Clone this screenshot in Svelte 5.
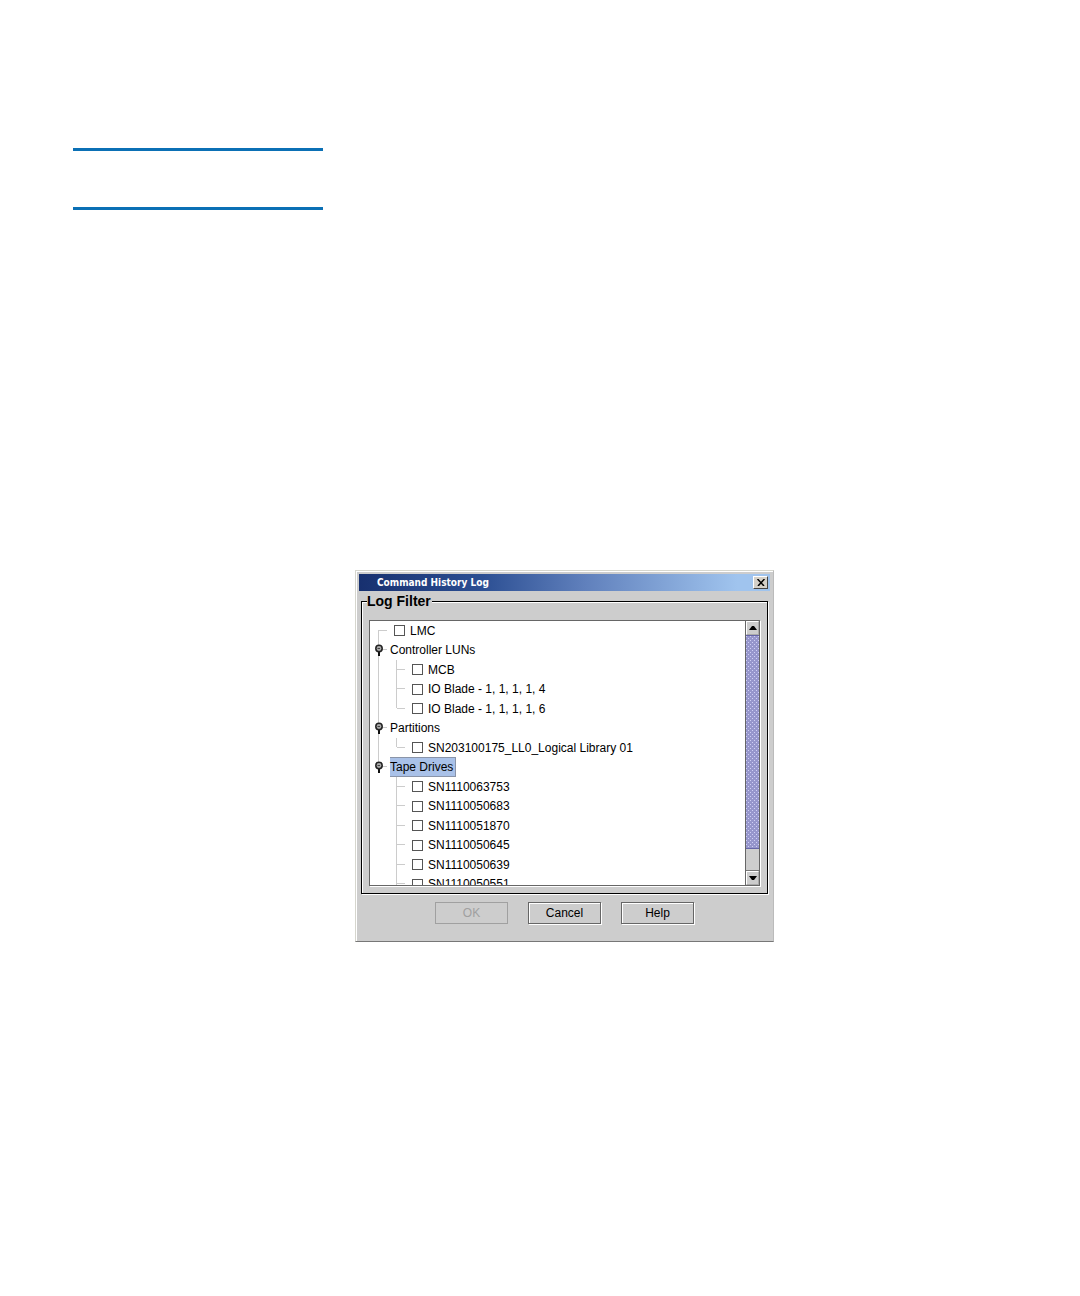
<script>
  const rows = [
    { label: 'LMC', level: 1 },
    { label: 'Controller LUNs', level: 1, group: true },
    { label: 'MCB', level: 2, trunk: true },
    { label: 'IO Blade - 1, 1, 1, 1, 4', level: 2, trunk: true },
    { label: 'IO Blade - 1, 1, 1, 1, 6', level: 2, trunk: true, last: true },
    { label: 'Partitions', level: 1, group: true },
    { label: 'SN203100175_LL0_Logical Library 01', level: 2, trunk: true, last: true },
    { label: 'Tape Drives', level: 1, group: true, last: true, selected: true },
    { label: 'SN1110063753', level: 2 },
    { label: 'SN1110050683', level: 2 },
    { label: 'SN1110051870', level: 2 },
    { label: 'SN1110050645', level: 2 },
    { label: 'SN1110050639', level: 2 },
    { label: 'SN1110050551', level: 2 },
  ];
</script>

{#snippet guide(top, bottom, branch, knob)}
  <svg class="guide" aria-hidden="true">
    {#if top !== bottom}<path d="M8.5 {top}V{bottom}" class="wire" />{/if}
    {#if branch}<path d="M9 9.5H17" class="wire" />{/if}
    {#if knob}
      <path d="M9 11V16" stroke="#111" stroke-width="2" />
      <circle cx="9" cy="8.5" r="3.2" fill="#aaa" stroke="#222" stroke-width="1.5" />
      <path d="M7.5 8.5H10" stroke="#444" />
    {/if}
  </svg>
{/snippet}

<main>
  <div class="heading-rule"></div>

  <section class="dialog" role="dialog" aria-labelledby="dialog-title">
    <header>
      <h1 id="dialog-title">Command History Log</h1>
      <button class="close" type="button" aria-label="Close">
        <svg width="8" height="7" viewBox="0 0 8 7" aria-hidden="true">
          <path d="M0.5 0L7 7M7.5 0L1 7" stroke="#000" stroke-width="1.5" />
        </svg>
      </button>
    </header>

    <fieldset>
      <legend>Log Filter</legend>
      <div class="pane">
        <ul role="tree" aria-label="Log Filter">
          {#each rows as row, i}
            <li role="treeitem" aria-level={row.level} aria-selected={!!row.selected}>
              {#if row.level === 1}
                {@render guide(i === 0 ? 9 : 0, row.last ? 9 : 20, true, row.group)}
              {:else}
                {@render guide(0, row.trunk ? 20 : 0, false, false)}
                {@render guide(0, row.last ? 9 : 20, true, false)}
              {/if}
              {#if row.group}
                <span class="node" class:selected={row.selected}>{row.label}</span>
              {:else}
                <label><input type="checkbox" />{row.label}</label>
              {/if}
            </li>
          {/each}
        </ul>
        <div class="scrollbar">
          <button type="button" aria-label="Scroll up">
            <svg width="8" height="4" viewBox="0 0 8 4" aria-hidden="true"><path d="M0 4L3 0H5L8 4Z" /></svg>
          </button>
          <div class="thumb"></div>
          <div class="track"></div>
          <button type="button" aria-label="Scroll down">
            <svg width="8" height="4" viewBox="0 0 8 4" aria-hidden="true"><path d="M0 0L3 4H5L8 0Z" /></svg>
          </button>
        </div>
      </div>
    </fieldset>

    <footer>
      <button type="button" disabled>OK</button>
      <button type="button">Cancel</button>
      <button type="button">Help</button>
    </footer>
  </section>
</main>

<style>
  :global(body) {
    margin: 0;
    background: #fff;
  }

  main {
    padding: 148px 73px;
    font: 12px/16px "Liberation Sans", Arial, sans-serif;
    color: #000;
  }

  .heading-rule {
    box-sizing: border-box;
    max-width: 250px;
    height: 62px;
    border-top: 3px solid #0b70b5;
    border-bottom: 3px solid #0b70b5;
  }

  .dialog {
    box-sizing: border-box;
    max-width: 419px;
    margin: 360px 0 0 282px;
    padding: 3px;
    background: #cdcdcd;
    border: 1px solid #d6d6ce;
    border-bottom-color: #777;
    border-right-color: #bbb;
    box-shadow: inset 1px 1px #fff;
  }

  header {
    display: flex;
    align-items: center;
    justify-content: space-between;
    height: 17px;
    padding: 0 2px 0 18px;
    background: linear-gradient(90deg, #17306f, #2c4f93 30%, #6080bc 55%, #a0c4ee 92%);
  }

  h1 {
    margin: 0;
    font: bold 10px/17px "DejaVu Sans Condensed", "DejaVu Sans", sans-serif;
    color: #fff;
  }

  button {
    display: flex;
    align-items: center;
    justify-content: center;
    box-sizing: border-box;
    margin: 0;
    padding: 0;
    font: inherit;
    color: #000;
    background: #cdcdcd;
  }

  .close {
    width: 15px;
    height: 13px;
    background: #d4d0c8;
    border: 1px solid;
    border-color: #fff #444 #444 #fff;
  }

  fieldset {
    min-width: 0;
    margin: 2px 2px 0;
    padding: 11px 7px 7px;
    border: 1px solid #000;
    box-shadow: 1px 1px #fff, inset 1px 1px #fff;
  }

  legend {
    margin-left: -2px;
    padding: 0 1px 0 0;
    background: #cdcdcd;
    font-size: 14px;
    line-height: 16px;
    font-weight: bold;
  }

  .pane {
    display: flex;
    box-sizing: border-box;
    height: 266px;
    background: #fff;
    border: 1px solid #666;
    box-shadow: 1px 1px #fff;
  }

  ul {
    flex: 1;
    min-width: 0;
    margin: 0;
    padding: 0;
    overflow: hidden;
    list-style: none;
  }

  li {
    display: flex;
    align-items: center;
    height: 20px;
    overflow: hidden;
    white-space: nowrap;
  }

  li:nth-child(odd) {
    height: 19px;
  }

  .guide {
    flex: none;
    align-self: flex-start;
    width: 18px;
    height: 20px;
  }

  .wire {
    fill: none;
    stroke: #ccc;
  }

  .node {
    margin-left: 2px;
    padding: 1px 2px 1px 0;
    border: 1px solid transparent;
    border-left-width: 0;
  }

  .selected {
    background: #a9c1e8;
    border-color: #8a94a8;
  }

  label {
    display: flex;
    align-items: center;
    gap: 5px;
    margin-left: 6px;
  }

  input {
    appearance: none;
    box-sizing: border-box;
    width: 11px;
    height: 11px;
    margin: 0;
    background: #fff;
    border: 1px solid #555;
  }

  .scrollbar {
    display: flex;
    flex-direction: column;
    width: 13px;
    border-left: 1px solid #666;
    background: #cdcdcd;
  }

  .scrollbar button {
    height: 14px;
    border: 1px solid;
    border-color: #fff #aaa #aaa #fff;
  }

  .thumb {
    flex: 10;
    border: 1px solid #6666a8;
    border-width: 1px 0;
    background-color: #9696cc;
    background-image:
      conic-gradient(from 270deg at 1px 1px, #d0d0f6 90deg, transparent 90deg),
      conic-gradient(from 270deg at 1px 1px, #d0d0f6 90deg, transparent 90deg);
    background-size: 4px 4px;
    background-position: 0 0, 2px 2px;
  }

  .track {
    flex: 1;
    border-bottom: 1px solid #777;
  }

  footer {
    display: flex;
    justify-content: center;
    gap: 20px;
    padding: 8px 0 14px;
  }

  footer button {
    width: 73px;
    height: 22px;
    border: 1px solid #666;
    box-shadow: 1px 1px #fff, inset 1px 1px #fff;
  }

  footer button:disabled {
    color: #a0a0a0;
    border-color: #a0a0a0;
    box-shadow: none;
  }
</style>
